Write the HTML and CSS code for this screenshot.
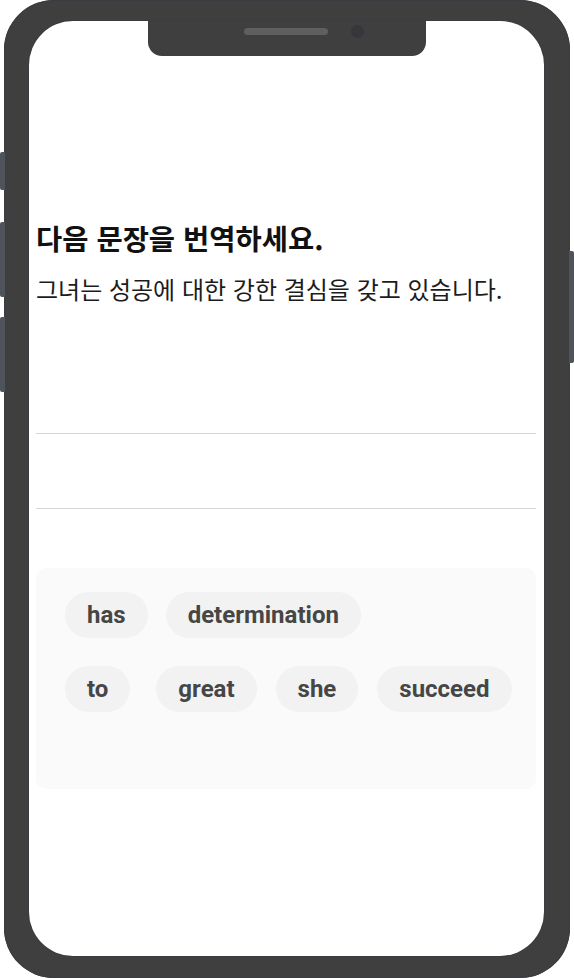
FILE: index.html
```html
<!DOCTYPE html>
<html lang="ko">
<head>
<meta charset="utf-8">
<title>번역 연습</title>
<link rel="stylesheet" href="styles.css">
</head>
<body>
<div class="device">
  <span class="side-btn btn-mute"></span>
  <span class="side-btn btn-vol-up"></span>
  <span class="side-btn btn-vol-down"></span>
  <span class="side-btn btn-power"></span>
  <div class="phone">
    <div class="screen">
      <div class="notch">
        <span class="speaker"></span>
        <span class="camera"></span>
      </div>
      <main class="content">
        <h1 class="title">다음 문장을 번역하세요.</h1>
        <p class="prompt">그녀는 성공에 대한 강한 결심을 갖고 있습니다.</p>
        <div class="answer">
          <div class="answer-line"></div>
          <div class="answer-line"></div>
        </div>
        <div class="bank">
          <div class="bank-row row-1">
            <button class="chip">has</button>
            <button class="chip">determination</button>
          </div>
          <div class="bank-row row-2">
            <button class="chip">to</button>
            <button class="chip chip-wide-gap">great</button>
            <button class="chip">she</button>
            <button class="chip">succeed</button>
          </div>
        </div>
      </main>
    </div>
  </div>
</div>
</body>
</html>
```
FILE: styles.css
```css
* { box-sizing: border-box; }
html, body { margin: 0; padding: 0; background: #ffffff; }
body { width: 574px; height: 978px; overflow: hidden; }

.device {
  position: relative;
  width: 574px;
  height: 978px;
  padding-left: 4px;
  padding-right: 4px;
}

.phone {
  width: 566px;
  height: 978px;
  background: #3f3f3f;
  border-radius: 50px;
  box-shadow: inset 0 0 0 1px #3a3c41;
  padding: 21px 26px 22px 25px;
}

.side-btn {
  position: absolute;
  width: 5px;
  background: #4f535a;
}
.btn-mute { left: 0; top: 152px; height: 38px; border-radius: 2px 0 0 2px; }
.btn-vol-up { left: 0; top: 222px; height: 75px; border-radius: 2px 0 0 2px; }
.btn-vol-down { left: 0; top: 317px; height: 75px; border-radius: 2px 0 0 2px; }
.btn-power { right: 0; top: 251px; height: 112px; border-radius: 0 2px 2px 0; }

.screen {
  position: relative;
  width: 515px;
  height: 935px;
  background: #ffffff;
  border-radius: 44px;
  box-shadow: 0 0 0 1px #3a3c41;
  overflow: hidden;
}

.notch {
  position: absolute;
  left: 119px;
  top: 0;
  width: 278px;
  height: 35px;
  background: #3f3f3f;
  border-radius: 0 0 14px 14px;
}
.speaker {
  position: absolute;
  left: 96px;
  top: 7px;
  width: 84px;
  height: 7px;
  border-radius: 4px;
  background: #5f5f5f;
}
.camera {
  position: absolute;
  left: 203px;
  top: 4px;
  width: 13px;
  height: 13px;
  border-radius: 50%;
  background: #35373b;
}

.content {
  padding: 199px 8px 0 7px;
  display: flex;
  flex-direction: column;
}

.title {
  margin: 0;
  font-family: "Noto Sans CJK KR", "Noto Sans", sans-serif;
  font-weight: 700;
  font-size: 28.5px;
  line-height: 36px;
  color: #111111;
}

.prompt {
  margin: 17px 0 0;
  font-family: "Noto Sans CJK KR", "Noto Sans", sans-serif;
  font-weight: 400;
  font-size: 24px;
  line-height: 32px;
  color: #1c1c1c;
}

.answer {
  margin-top: 128px;
  display: flex;
  flex-direction: column;
  gap: 74px;
}
.answer-line {
  height: 1px;
  background: #d6d6d6;
}

.bank {
  margin-top: 59px;
  height: 221px;
  background: #fafafa;
  border-radius: 10px;
  padding: 24px 22px 0 29px;
  display: flex;
  flex-direction: column;
  gap: 28px;
}
.bank-row {
  display: flex;
  gap: 19px;
}
.row-1 { gap: 18px; }

.chip {
  border: none;
  margin: 0;
  height: 46px;
  padding: 0 22px;
  border-radius: 23px;
  background: #f2f2f2;
  font-family: Roboto, "Liberation Sans", sans-serif;
  font-weight: 700;
  font-size: 24px;
  color: #464646;
  line-height: 46px;
}
.chip.chip-wide-gap { margin-left: 7px; }
```
